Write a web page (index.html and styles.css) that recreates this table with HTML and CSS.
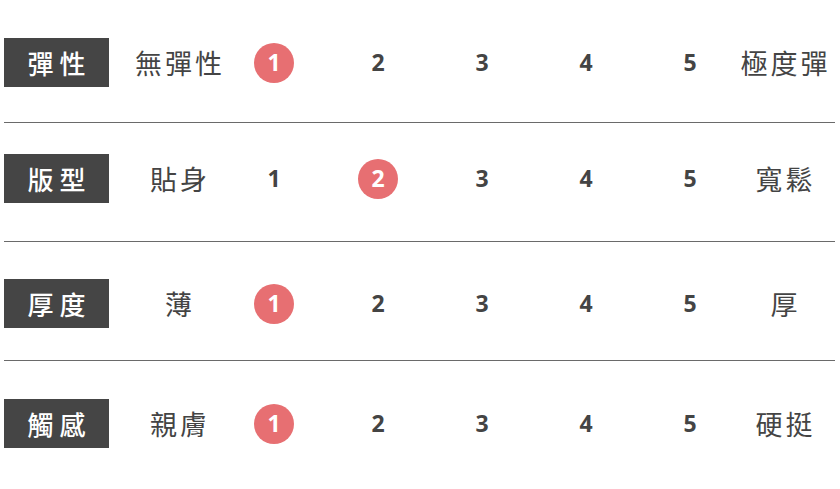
FILE: index.html
```html
<!DOCTYPE html>
<html lang="zh-Hant">
<head>
<meta charset="utf-8">
<title>尺寸感受</title>
<link rel="stylesheet" href="styles.css">
</head>
<body>
<div class="chart">
  <div class="row r1">
    <div class="label">彈性</div>
    <div class="end start"><span>無彈性</span></div>
    <div class="cell"><span class="num on">1</span></div>
    <div class="cell"><span class="num">2</span></div>
    <div class="cell"><span class="num">3</span></div>
    <div class="cell"><span class="num">4</span></div>
    <div class="cell"><span class="num">5</span></div>
    <div class="end finish"><span>極度彈</span></div>
  </div>
  <div class="row r2">
    <div class="label">版型</div>
    <div class="end start"><span>貼身</span></div>
    <div class="cell"><span class="num">1</span></div>
    <div class="cell"><span class="num on">2</span></div>
    <div class="cell"><span class="num">3</span></div>
    <div class="cell"><span class="num">4</span></div>
    <div class="cell"><span class="num">5</span></div>
    <div class="end finish"><span>寬鬆</span></div>
  </div>
  <div class="row r3">
    <div class="label">厚度</div>
    <div class="end start"><span>薄</span></div>
    <div class="cell"><span class="num on">1</span></div>
    <div class="cell"><span class="num">2</span></div>
    <div class="cell"><span class="num">3</span></div>
    <div class="cell"><span class="num">4</span></div>
    <div class="cell"><span class="num">5</span></div>
    <div class="end finish"><span>厚</span></div>
  </div>
  <div class="row r4">
    <div class="label">觸感</div>
    <div class="end start"><span>親膚</span></div>
    <div class="cell"><span class="num on">1</span></div>
    <div class="cell"><span class="num">2</span></div>
    <div class="cell"><span class="num">3</span></div>
    <div class="cell"><span class="num">4</span></div>
    <div class="cell"><span class="num">5</span></div>
    <div class="end finish"><span>硬挺</span></div>
  </div>
</div>
</body>
</html>
```

FILE: styles.css
```css
html, body {
  margin: 0;
  padding: 0;
  background: #ffffff;
}

body {
  font-family: "Noto Sans CJK TC", "Noto Sans", sans-serif;
  color: #444444;
}

.chart {
  width: 831px;
  margin-left: 4px;
}

.row {
  display: grid;
  grid-template-columns: 105px 113px repeat(5, 104px) 93px;
  align-items: center;
  border-bottom: 1px solid #6a6a6a;
}

.row.r1 { padding: 38px 0 35px; }
.row.r2 { padding: 31px 0 38px; }
.row.r3 { padding: 37px 0 32px; }
.row.r4 { padding: 38px 0 0; border-bottom: none; }

.label {
  height: 49px;
  background: #454545;
  color: #ffffff;
  font-size: 26px;
  font-weight: 500;
  letter-spacing: 6px;
  text-indent: 6px;
  display: flex;
  align-items: center;
  justify-content: center;
  line-height: 1;
  white-space: nowrap;
}

.end {
  display: flex;
  justify-content: center;
  align-items: center;
  height: 49px;
  font-size: 27px;
  letter-spacing: 3px;
  line-height: 1;
  white-space: nowrap;
  color: #444444;
  min-width: 0;
}

.end span {
  flex: none;
  padding-left: 3px;
}

.end.start {
  padding-left: 26px;
}

.end.finish {
  padding-right: 9px;
}

.cell {
  display: flex;
  justify-content: center;
  align-items: center;
}

.num {
  width: 40px;
  height: 40px;
  border-radius: 50%;
  display: flex;
  align-items: center;
  justify-content: center;
  font-family: "Open Sans", "Liberation Sans", sans-serif;
  font-weight: 700;
  font-size: 23px;
  line-height: 1;
  color: #444444;
}

.num.on {
  background: #e76f72;
  color: #ffffff;
}
```
